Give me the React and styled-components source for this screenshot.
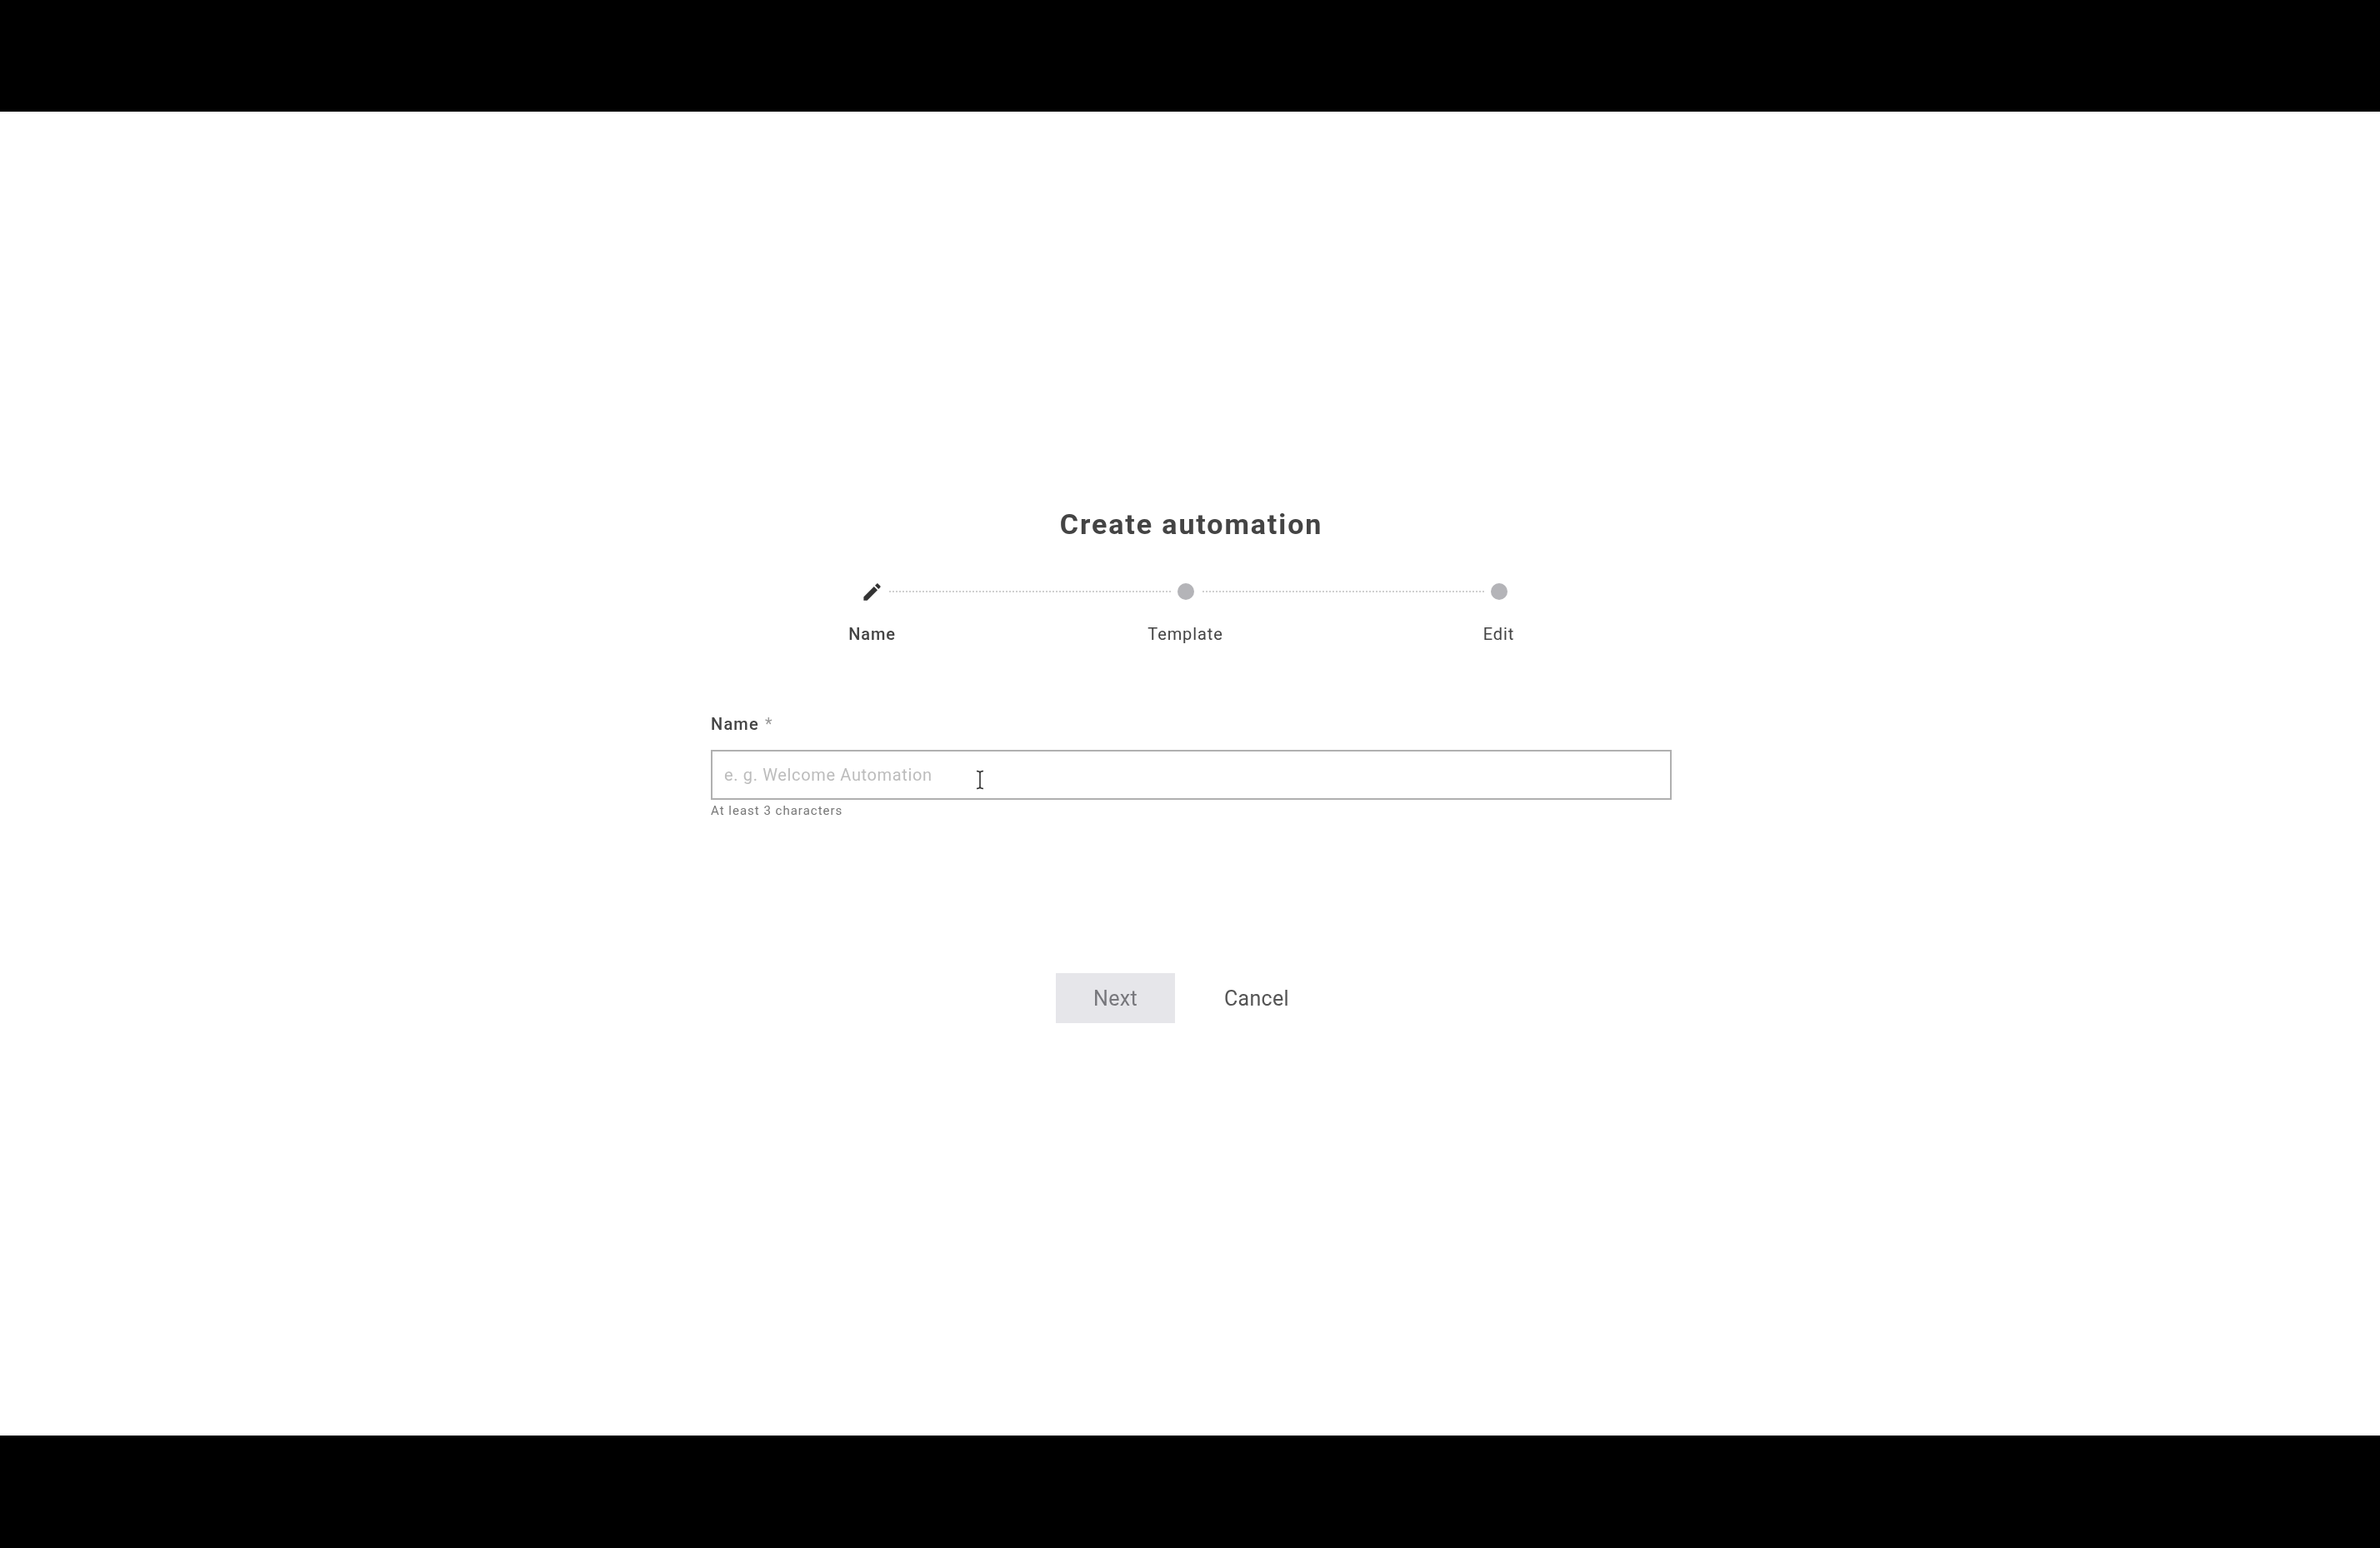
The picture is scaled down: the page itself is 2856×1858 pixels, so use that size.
import React from "react";
import styled, { createGlobalStyle } from "styled-components";

const Global = createGlobalStyle`
  html, body { margin: 0; padding: 0; background: #000; }
  body { font-family: Roboto, "Liberation Sans", sans-serif; }
  * { box-sizing: border-box; }
`;

const Page = styled.div`
  width: 2856px;
  height: 1858px;
  display: flex;
  flex-direction: column;
  background: #000;
`;

const Bar = styled.div`
  flex: 0 0 ${(p) => p.$height}px;
  background: #000;
`;

const Canvas = styled.main`
  flex: 1;
  background: #fff;
  display: flex;
  flex-direction: column;
  align-items: center;
  padding-top: 475px;
  filter: blur(0.6px);
`;

const Title = styled.h1`
  margin: 0 0 0 3px;
  font-size: 34px;
  line-height: 40px;
  font-weight: 700;
  letter-spacing: 1.9px;
  color: #444;
`;

const Stepper = styled.div`
  width: 1128px;
  margin: 47px 0 0 -11px;
`;

const Track = styled.div`
  display: flex;
  align-items: center;
  height: 28px;
  padding: 0 178px;
`;

const Marker = styled.span`
  flex: 0 0 20px;
  min-width: 0;
  height: 20px;
  display: flex;
  align-items: center;
  justify-content: center;
  svg { flex-shrink: 0; }
`;

const Dot = styled.span`
  width: 20px;
  height: 20px;
  border-radius: 50%;
  background: #b4b4b8;
`;

const Connector = styled.span`
  flex: 1;
  margin: 0 8px 0 10px;
  border-top: 2px dotted #cfcfcf;
`;

const Labels = styled.div`
  display: grid;
  grid-template-columns: repeat(3, 1fr);
  margin-top: 25px;
`;

const StepLabel = styled.span`
  text-align: center;
  font-size: 20px;
  line-height: 24px;
  letter-spacing: 0.9px;
  font-weight: ${(p) => (p.$active ? 500 : 400)};
  color: #444;
`;

const Form = styled.form`
  width: 1153px;
  margin: 84px 0 0 3px;
  display: flex;
  flex-direction: column;
`;

const FieldLabel = styled.label`
  font-size: 20px;
  line-height: 24px;
  font-weight: 500;
  letter-spacing: 1.2px;
  color: #444;
`;

const Required = styled.span`
  margin-left: 7px;
  font-weight: 400;
  color: #999;
`;

const InputWrap = styled.div`
  position: relative;
  margin-top: 19px;
`;

const TextInput = styled.input`
  display: block;
  width: 100%;
  height: 60px;
  padding: 0 14px;
  border: 2px solid #b0b0b0;
  border-radius: 0;
  outline: none;
  background: #fff;
  font: 400 20px Roboto, sans-serif;
  letter-spacing: 0.65px;
  color: #444;
  &::placeholder { color: #bcbcbc; opacity: 1; }
`;

const Caret = styled.svg`
  position: absolute;
  left: 318px;
  top: 24px;
  width: 10px;
  height: 24px;
`;

const Helper = styled.div`
  margin-top: 4px;
  font-size: 15px;
  line-height: 18px;
  letter-spacing: 1px;
  color: #777;
`;

const Actions = styled.div`
  margin: 186px 0 0 -42px;
  display: flex;
  align-items: center;
  gap: 59px;
`;

const PrimaryButton = styled.button`
  width: 143px;
  height: 60px;
  border: 0;
  background: #e6e6ea;
  color: #77777c;
  font: 400 25px Roboto, sans-serif;
  letter-spacing: 0.3px;
`;

const TextButton = styled.button`
  padding: 0;
  border: 0;
  background: none;
  color: #555;
  font: 400 25px Roboto, sans-serif;
  letter-spacing: 0.3px;
`;

const EditIcon = () => (
  <svg width="27" height="27" viewBox="0 0 24 24" fill="#333">
    <path d="M3 17.25V21h3.75L17.81 9.94l-3.75-3.75L3 17.25zM20.71 7.04c.39-.39.39-1.02 0-1.41l-2.34-2.34c-.39-.39-1.02-.39-1.41 0l-1.83 1.83 3.75 3.75 1.83-1.83z" />
  </svg>
);

export default function App() {
  return (
    <Page>
      <Global />
      <Bar $height={134} />
      <Canvas>
        <Title>Create automation</Title>
        <Stepper>
          <Track>
            <Marker><EditIcon /></Marker>
            <Connector />
            <Marker><Dot /></Marker>
            <Connector />
            <Marker><Dot /></Marker>
          </Track>
          <Labels>
            <StepLabel $active>Name</StepLabel>
            <StepLabel>Template</StepLabel>
            <StepLabel>Edit</StepLabel>
          </Labels>
        </Stepper>
        <Form>
          <FieldLabel htmlFor="name">Name<Required>*</Required></FieldLabel>
          <InputWrap>
            <TextInput id="name" placeholder="e. g. Welcome Automation" />
            <Caret viewBox="0 0 10 24" fill="none" stroke="#333" strokeWidth="1.6">
              <path d="M1 1.5c2.5 0 4 1 4 2.500v16c0 1.500-1.500 2.500-4 2.500M9 1.500c-2.500 0-4 1-4 2.500v16c0 1.500 1.500 2.500 4 2.500" />
            </Caret>
          </InputWrap>
          <Helper>At least 3 characters</Helper>
        </Form>
        <Actions>
          <PrimaryButton type="button">Next</PrimaryButton>
          <TextButton type="button">Cancel</TextButton>
        </Actions>
      </Canvas>
      <Bar $height={135} />
    </Page>
  );
}
